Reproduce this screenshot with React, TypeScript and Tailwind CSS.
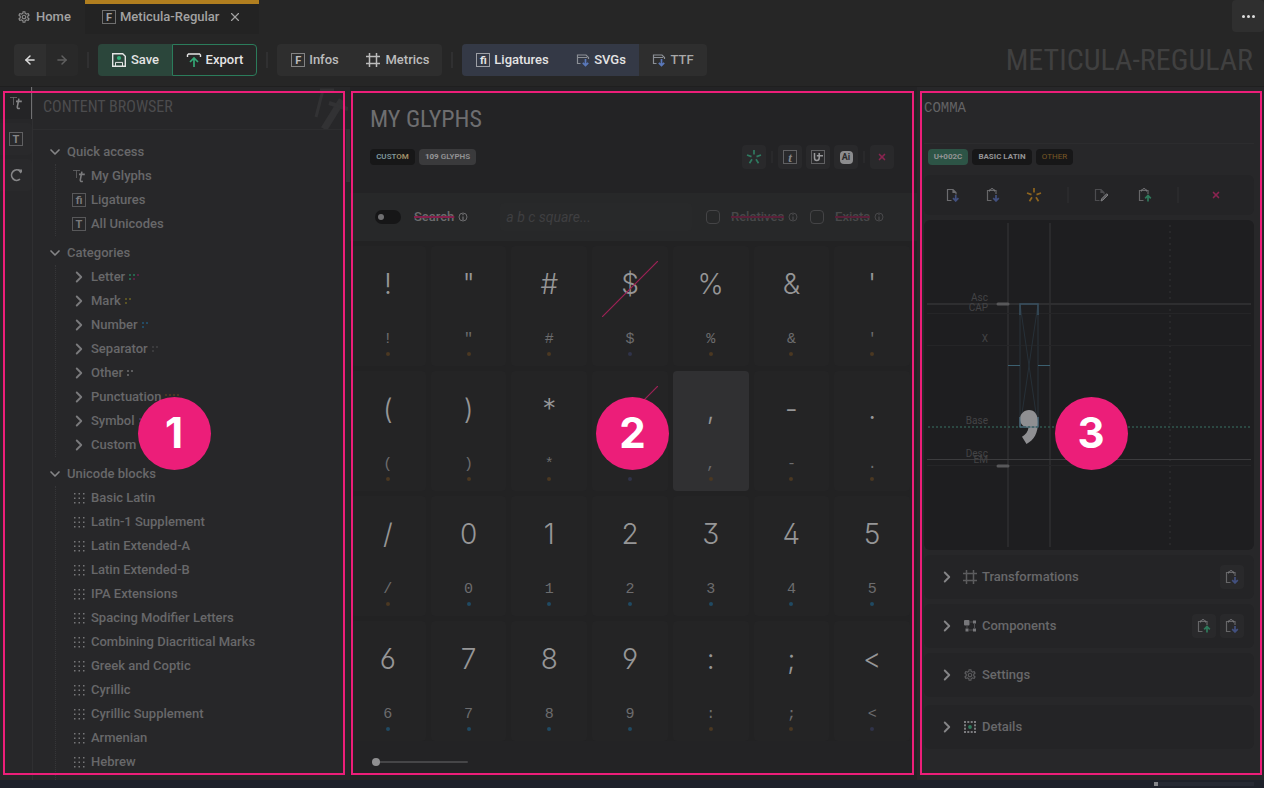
import React from "react";
import { MdOutlineSettings } from "react-icons/md";
import { ArrowLeft, ArrowRight, ChevronDown, ChevronRight, X } from "lucide-react";

type IconProps = { className?: string };

function LetterBox({ children, italic }: { children: React.ReactNode; italic?: boolean }) {
  return (
    <span
      aria-hidden="true"
      className={
        "flex size-3.5 shrink-0 items-center justify-center border border-current/60 leading-none font-bold " +
        (italic ? "font-['Liberation_Serif',serif] text-[13px] italic" : "text-[11px]")
      }
    >
      {children}
    </span>
  );
}

function TtIcon({ className }: IconProps) {
  return (
    <svg className={className} width="14" height="14" viewBox="0 0 14 14" aria-hidden="true">
      <path d="M1 1.5h7M4.5 1.5v7.5" stroke="currentColor" opacity=".6" fill="none" />
      <path d="M9.900 2.600 8.300 10.800c-.2 1.400.6 2.100 2.500 1.400M7 5.400h5.800" stroke="currentColor" strokeWidth="1.6" fill="none" />
    </svg>
  );
}

function RefreshIcon() {
  return (
    <svg width="14" height="14" viewBox="0 0 14 14" aria-hidden="true">
      <path d="M11 11.200a5.200 5.200 0 1 1 .2-8" stroke="currentColor" strokeWidth="1.7" fill="none" />
      <path d="M8.500 1.500h4.500v2.500l-1.500 1.500z" fill="currentColor" />
    </svg>
  );
}

function HashIcon({ className }: IconProps) {
  return (
    <svg className={className} width="16" height="16" viewBox="0 0 16 16" aria-hidden="true">
      <path d="M4.5 1v14M11.5 1v14M1 4.5h14M1 11.5h14" stroke="currentColor" strokeWidth="1.5" fill="none" />
    </svg>
  );
}

function SaveIcon() {
  return (
    <svg width="16" height="16" viewBox="0 0 16 16" aria-hidden="true">
      <path d="M1.7 1.7h10l2.6 2.6v10H1.7z" stroke="currentColor" strokeWidth="1.4" fill="none" />
      <path d="M4.5 14v-3.6h7V14" stroke="currentColor" fill="none" />
      <circle cx="8" cy="6" r="2.1" fill="#35b07c" />
    </svg>
  );
}

function ExportIcon() {
  return (
    <svg width="16" height="16" viewBox="0 0 16 16" aria-hidden="true">
      <path d="M1.5 5V3l1-1h11l1 1v2" stroke="currentColor" strokeWidth="1.4" fill="none" />
      <path d="M8 15V6.500M4 10l4-4 4 4" stroke="#35a877" strokeWidth="1.7" fill="none" />
    </svg>
  );
}

function WindowDownIcon() {
  return (
    <svg width="14" height="14" viewBox="0 0 14 14" aria-hidden="true">
      <path d="M4.500 10.500H1.500v-8.500h8.500l2.500 2.500v1.500M1.500 4.500H11" stroke="#8b8f95" strokeWidth="1.2" fill="none" />
      <path d="M9.500 6v6.500M6.800 9.800l2.700 2.800 2.700-2.800" stroke="#5a78ba" strokeWidth="1.7" fill="none" />
    </svg>
  );
}

function ClipboardIcon({ up }: { up?: boolean }) {
  return (
    <svg width="14" height="14" viewBox="0 0 14 14" aria-hidden="true">
      <path d="M5.500 12.500H1.500V2.500h8.500v3.500" stroke="#666668" strokeWidth="1.2" fill="none" />
      <path d="M3.500 3.500V1.800h1.300l.5-1.200h1.500l.5 1.200h1.200v1.700" stroke="#77777a" strokeWidth="1" fill="none" />
      {up ? (
        <path d="M10 13.500V8M7.200 10.300l2.800-2.800 2.800 2.800" stroke="#2f7a5c" strokeWidth="1.700" fill="none" />
      ) : (
        <path d="M10 7v5.800M7.200 10.200l2.800 2.700 2.800-2.700" stroke="#42507f" strokeWidth="1.700" fill="none" />
      )}
    </svg>
  );
}

function FileIcon({ edit }: { edit?: boolean }) {
  return (
    <svg width="14" height="14" viewBox="0 0 14 14" aria-hidden="true">
      <path
        d="M5.500 12.500H1.500V1.500h5.500l3 3v2M7 1.500v3h3"
        stroke={edit ? "#4c4c4f" : "#6c6c6f"}
        strokeWidth="1.200"
        fill="none"
      />
      {edit ? (
        <path d="m7 13 .7-2.300 5-5 1.300 1.300-5 5z" stroke="#7c7c7f" strokeWidth="1" fill="#5c5c5f" />
      ) : (
        <path d="M9.700 7v5.800M7 10.200l2.700 2.700 2.700-2.700" stroke="#42507f" strokeWidth="1.700" fill="none" />
      )}
    </svg>
  );
}

function BurstIcon({ className }: IconProps) {
  return (
    <svg className={className} width="16" height="16" viewBox="0 0 16 16" aria-hidden="true">
      <path
        d="M8 1v4.500M1 6l4.500 1.600M15 6l-4.500 1.600M3.500 14.300l2.500-4M12.500 14.300l-2.500-4"
        stroke="currentColor"
        strokeWidth="1.700"
        fill="none"
      />
    </svg>
  );
}

function DotsIcon() {
  return (
    <svg width="12" height="12" viewBox="0 0 12 12" aria-hidden="true" fill="#767678">
      {[0, 1, 2].map((r) => [0, 1, 2].map((c) => <rect key={r + "-" + c} x={1 + c * 4.500} y={1 + r * 4.500} width="1.500" height="1.500" />))}
    </svg>
  );
}

function ComponentsIcon() {
  return (
    <svg width="14" height="14" viewBox="0 0 14 14" aria-hidden="true" fill="#77777a">
      <rect x="1" y="1" width="5.500" height="5.500" rx="1" />
      <rect x="10" y="1.500" width="3" height="3" />
      <rect x="2.500" y="9.500" width="3" height="3" />
      <rect x="10" y="9.500" width="3" height="3" />
      <path d="M6.500 3H10M11.500 4.500v5M4 6.500v3M5.500 11H10" stroke="#4c4c4f" />
    </svg>
  );
}

function DetailsIcon() {
  return (
    <svg width="14" height="14" viewBox="0 0 14 14" aria-hidden="true">
      <g fill="#7c7c7f">
        {[1, 4.300, 7.700, 11].map((p) => (
          <React.Fragment key={p}>
            <rect x={p} y="1" width="2" height="2" />
            <rect x={p} y="11" width="2" height="2" />
            <rect x="1" y={p} width="2" height="2" />
            <rect x="11" y={p} width="2" height="2" />
          </React.Fragment>
        ))}
      </g>
      <circle cx="7" cy="7" r="1.900" fill="#2f7a5c" />
    </svg>
  );
}

function InfoIcon() {
  return (
    <svg width="10" height="10" viewBox="0 0 10 10" aria-hidden="true" className="shrink-0">
      <circle cx="5" cy="5" r="4" stroke="currentColor" fill="none" />
      <path d="M5 4.500V8M5 2v1.300" stroke="currentColor" strokeWidth="1.300" />
    </svg>
  );
}

function Divider({ className = "h-4 bg-[#303031]" }: IconProps) {
  return <span className={"w-0.5 shrink-0 " + className} />;
}

function Marker({ n, className }: { n: number; className: string }) {
  return (
    <div className={"pointer-events-none absolute top-1 bottom-[5px] z-20 grid place-items-center border-2 border-[#ec1e79] " + className}>
      <span className="grid size-[73px] place-items-center rounded-full bg-[#ec1e79] font-[Inter,sans-serif] text-[42px] leading-none font-bold text-white">
        {n}
      </span>
    </div>
  );
}

function Header() {
  return (
    <header className="flex h-[34px] shrink-0 justify-between text-[13px] font-medium text-[#a2a2a2]">
      <nav className="flex" aria-label="Tabs">
        <a href="#home" className="flex w-[85px] items-center gap-[5px] pl-[17px]">
          <MdOutlineSettings className="size-3.5 shrink-0 text-[#8c8c8c]" />
          Home
        </a>
        <div className="flex w-[174px] items-center border-t-4 border-[#b07e1f] bg-[#232323] pr-[17px] pb-1 pl-[17px]">
          <a href="#meticula" className="flex flex-1 items-center gap-1">
            <LetterBox>F</LetterBox>
            Meticula-Regular
          </a>
          <button type="button" aria-label="Close tab">
            <X className="size-3.5" />
          </button>
        </div>
      </nav>
      <button type="button" aria-label="More" className="flex h-8 w-8 items-center justify-center gap-[2px] rounded-sm bg-[#2f2f2f]">
        <span className="size-[3px] rounded-full bg-[#dddddd]" />
        <span className="size-[3px] rounded-full bg-[#dddddd]" />
        <span className="size-[3px] rounded-full bg-[#dddddd]" />
      </button>
    </header>
  );
}

function Toolbar() {
  const btn = "flex h-8 items-center justify-center gap-1 ";
  return (
    <div className="flex h-[53px] shrink-0 items-center justify-between border-b border-[#1f1f1f] pr-[11px] pl-3.5 text-[13px] font-medium">
      <div className="flex items-center gap-[9px]">
        <div className="flex overflow-hidden rounded">
          <button type="button" aria-label="Back" className={btn + "w-8 bg-[#2f2f2f] text-[#dddddd]"}>
            <ArrowLeft className="size-3.5" strokeWidth={2.5} />
          </button>
          <button type="button" aria-label="Forward" className={btn + "w-8 bg-[#292929] text-[#606060]"}>
            <ArrowRight className="size-3.5" strokeWidth={2.5} />
          </button>
        </div>
        <Divider />
        <div className="flex text-[#e4e4e4]">
          <button type="button" className={btn + "w-[74px] rounded-l bg-[#2b463b]"}>
            <SaveIcon />
            Save
          </button>
          <button type="button" className={btn + "w-[85px] rounded-r border border-[#2b7c5b]"}>
            <ExportIcon />
            Export
          </button>
        </div>
        <Divider />
        <div className="flex overflow-hidden rounded bg-[#2e2e2e] text-[#bcbcbc]">
          <button type="button" className={btn + "w-[76px]"}>
            <LetterBox>F</LetterBox>
            Infos
          </button>
          <button type="button" className={btn + "w-[89px]"}>
            <HashIcon />
            Metrics
          </button>
        </div>
        <Divider />
        <div className="flex overflow-hidden rounded bg-[#2e2e2e]">
          <button type="button" className={btn + "w-[101px] bg-[#343946] text-[#e4e4e4]"}>
            <LetterBox>fi</LetterBox>
            Ligatures
          </button>
          <button type="button" className={btn + "w-[76px] bg-[#343946] text-[#e4e4e4]"}>
            <WindowDownIcon />
            SVGs
          </button>
          <button type="button" className={btn + "w-[68px] text-[#a8a8a8]"}>
            <WindowDownIcon />
            TTF
          </button>
        </div>
      </div>
      <h1 className="font-['Roboto_Condensed','Liberation_Sans_Narrow',sans-serif] text-3xl leading-none font-normal whitespace-nowrap text-[#404040] uppercase">
        Meticula-Regular
      </h1>
    </div>
  );
}

const categories: { name: string; colors: string[] }[] = [
  { name: "Letter", colors: ["#26654e", "#26654e", "#26654e", "#5a2145", "#5a2145"] },
  { name: "Mark", colors: ["#5a5324", "#5a5324", "#5a5324"] },
  { name: "Number", colors: ["#234a63", "#234a63", "#234a63"] },
  { name: "Separator", colors: ["#3b3b3d", "#3b3b3d", "#3b3b3d"] },
  { name: "Other", colors: ["#5c5c5e", "#5c5c5e", "#5c5c5e"] },
  { name: "Punctuation", colors: ["#493722", "#493722", "#493722", "#493722", "#493722", "#493722"] },
  { name: "Symbol", colors: ["#35385a", "#35385a", "#35385a"] },
  { name: "Custom", colors: [] },
];

const blocks = [
  "Basic Latin",
  "Latin-1 Supplement",
  "Latin Extended-A",
  "Latin Extended-B",
  "IPA Extensions",
  "Spacing Modifier Letters",
  "Combining Diacritical Marks",
  "Greek and Coptic",
  "Cyrillic",
  "Cyrillic Supplement",
  "Armenian",
  "Hebrew",
];

const dotSpots = [
  [0, 1],
  [0, 5],
  [4, 1],
  [4, 5],
  [8, 1],
  [12, 1],
];

function ColorDots({ colors }: { colors: string[] }) {
  return (
    <svg width="16" height="8" viewBox="0 0 16 8" aria-hidden="true">
      {colors.map((c, i) => (
        <rect key={i} x={dotSpots[i][0]} y={dotSpots[i][1]} width="2" height="2" fill={c} />
      ))}
    </svg>
  );
}

function TreeGroup({ title, children }: { title: string; children: React.ReactNode }) {
  return (
    <li>
      <button type="button" aria-expanded="true" className="flex h-6 items-center gap-1">
        <ChevronDown className="size-4 text-[#858587]" strokeWidth={2.5} />
        {title}
      </button>
      <ul className="ml-2 border-l border-dotted border-[#363638] pl-[15px]">{children}</ul>
    </li>
  );
}

function TreeItem({ icon, children }: { icon: React.ReactNode; children: React.ReactNode }) {
  return (
    <li>
      <a href="#glyphs" className="flex h-6 items-center gap-1">
        <span className="flex w-4 shrink-0 justify-center text-[#7a7a7c]">{icon}</span>
        {children}
      </a>
    </li>
  );
}

function Browser() {
  const rail = "flex size-8 items-center justify-center ";
  return (
    <aside className="relative flex w-[350px] shrink-0 bg-[#272729]" aria-label="Content browser">
      <nav className="flex w-8 shrink-0 flex-col gap-1 text-[#858587]" aria-label="Views">
        <button type="button" aria-label="Glyphs" className={rail + "bg-[#242426] shadow-[inset_-1px_0_0_#707072]"}>
          <TtIcon />
        </button>
        <button type="button" aria-label="Unicodes" className={rail + "rounded-r bg-[#29292b]"}>
          <LetterBox>T</LetterBox>
        </button>
        <button type="button" aria-label="Reload" className={rail + "rounded-r bg-[#29292b]"}>
          <RefreshIcon />
        </button>
      </nav>
      <div className="flex min-w-0 flex-1 flex-col border-l border-[#2f2f31]">
        <div className="flex h-[43px] shrink-0 items-start justify-between border-b border-[#2d2d2f] pr-0.5 pl-2.5">
          <h2 className="pt-2 font-['Roboto_Condensed','Liberation_Sans_Narrow',sans-serif] text-base leading-6 font-normal text-[#4c4c4e] uppercase">
            Content browser
          </h2>
          <svg width="34" height="42" viewBox="0 0 34 42" aria-hidden="true" fill="none" stroke="#323234">
            <path d="M6 3h14M9 3 2 30" strokeWidth="3" />
            <path d="M28 13 10 42" strokeWidth="7" />
            <path d="M15 16l19 6" strokeWidth="4" />
          </svg>
        </div>
        <ul className="flex min-h-0 flex-1 flex-col gap-[5px] overflow-hidden pt-2.5 pl-3.5 text-[13px] font-medium text-[#68686a]">
          <TreeGroup title="Quick access">
            <TreeItem icon={<TtIcon />}>My Glyphs</TreeItem>
            <TreeItem icon={<LetterBox>fi</LetterBox>}>Ligatures</TreeItem>
            <TreeItem icon={<LetterBox>T</LetterBox>}>All Unicodes</TreeItem>
          </TreeGroup>
          <TreeGroup title="Categories">
            {categories.map((c) => (
              <TreeItem key={c.name} icon={<ChevronRight className="size-[18px] shrink-0" strokeWidth={2.5} />}>
                {c.name}
                <ColorDots colors={c.colors} />
              </TreeItem>
            ))}
          </TreeGroup>
          <TreeGroup title="Unicode blocks">
            {blocks.map((b) => (
              <TreeItem key={b} icon={<DotsIcon />}>
                {b}
              </TreeItem>
            ))}
            <li className="h-6" />
          </TreeGroup>
        </ul>
      </div>
      <span className="absolute top-[42px] right-0 h-[53px] w-1 bg-[#333335]" />
      <Marker n={1} className="right-[5px] left-[3px]" />
    </aside>
  );
}

type Glyph = { c: string; kind: "punct" | "digit" | "symbol"; missing?: boolean; selected?: boolean };

const glyphs: Glyph[] = [
  ..."!\"#".split("").map((c) => ({ c, kind: "punct" as const })),
  { c: "$", kind: "symbol", missing: true },
  ..."%&'()*".split("").map((c) => ({ c, kind: "punct" as const })),
  { c: "+", kind: "symbol", missing: true },
  { c: ",", kind: "punct", selected: true },
  ..."-./".split("").map((c) => ({ c, kind: "punct" as const })),
  ..."0123456789".split("").map((c) => ({ c, kind: "digit" as const })),
  ...":;".split("").map((c) => ({ c, kind: "punct" as const })),
  { c: "<", kind: "symbol" },
];

const dotColor = { punct: "bg-[#4b3822]", digit: "bg-[#204a63]", symbol: "bg-[#30334a]" };

function GlyphCell({ g }: { g: Glyph }) {
  return (
    <button
      type="button"
      className={"relative flex h-[120px] flex-col items-center rounded " + (g.selected ? "bg-[#303032]" : "bg-[#242425]")}
    >
      <span className="flex h-[76px] items-center font-[Inter,sans-serif] text-[28px] font-[350] text-[#969697] [font-feature-settings:'cv09','ss01']">
        {g.c}
      </span>
      <span className="flex h-8 items-center pt-1 font-['Liberation_Mono',monospace] text-[15px] text-[#6c6c6e]">{g.c}</span>
      <span className={"-mt-0.5 size-1 rounded-full " + dotColor[g.kind]} />
      {g.missing && (
        <svg className="absolute inset-x-0 top-[15px] mx-auto" width="56" height="56" viewBox="0 0 56 56" aria-hidden="true">
          <path d="M0 56 56 0" stroke="#9e2257" strokeWidth="1.200" />
        </svg>
      )}
    </button>
  );
}

function GlyphsPanel() {
  const tool = "flex size-6 items-center justify-center rounded bg-[#29292b] ";
  return (
    <main className="relative flex min-w-0 flex-1 flex-col bg-[#232325]">
      <div className="flex h-[106px] shrink-0 flex-col pr-[23px] pl-5">
        <h2 className="pt-4 font-['Roboto_Condensed','Liberation_Sans_Narrow',sans-serif] text-2xl leading-8 font-normal text-[#6e6e70] uppercase">
          My Glyphs
        </h2>
        <div className="mt-2.5 flex items-center justify-between">
          <div className="flex gap-1 text-[8px] leading-4 font-semibold text-[#939395]">
            <span className="w-[45px] rounded bg-[#171718] text-center">
              <span className="text-[#7f979d]">CUST</span>
              <span className="text-[#a09168]">OM</span>
            </span>
            <span className="w-[57px] rounded bg-[#3a3a3c] text-center">
              <b className="font-extrabold">109</b> GLYPHS
            </span>
          </div>
          <div className="flex items-center gap-1">
            <button type="button" aria-label="Add glyphs" className={tool + "text-[#2f7a60]"}>
              <BurstIcon />
            </button>
            <Divider className="mx-px h-3 bg-[#29292b]" />
            <button type="button" aria-label="Add from text" className={tool + "text-[#858587]"}>
              <LetterBox italic>t</LetterBox>
            </button>
            <button type="button" aria-label="Add from unicode" className={tool + "text-[#9a9a9c]"}>
              <span className="flex size-3.5 items-center justify-center border border-current/50">
                <svg width="10" height="10" viewBox="0 0 10 10" fill="none" stroke="currentColor" strokeWidth="1.500" aria-hidden="true">
                  <path d="M1.500 1v5q0 2.500 2.300 2.500T6.200 6V1M3.800 3.800H10" />
                </svg>
              </span>
            </button>
            <button type="button" aria-label="Add from Illustrator" className={tool}>
              <span className="flex size-[13px] items-center justify-center rounded-sm bg-[#8c8c8e] text-[9px] leading-none font-bold text-[#29292b]">
                Ai
              </span>
            </button>
            <Divider className="mx-px h-3 bg-[#29292b]" />
            <button type="button" aria-label="Remove glyphs" className={tool + "text-[#8a2450]"}>
              <X className="size-2.5" strokeWidth={4} />
            </button>
          </div>
        </div>
      </div>

      <form
        className="flex h-12 shrink-0 items-center bg-[#272829] pr-[33px] pl-[25px] text-[13px] font-medium text-[#6c6c6e]"
        onSubmit={(e) => e.preventDefault()}
      >
        <label className="flex items-center gap-[13px]">
          <input
            type="checkbox"
            role="switch"
            className="h-3.5 w-[26px] appearance-none rounded-full bg-[#161617] before:mt-1 before:ml-[3px] before:block before:size-1.5 before:rounded-full before:bg-[#6f6f71]"
          />
          <span className="flex items-center gap-1">
            <span className="line-through decoration-[#84204c] decoration-2">Search</span>
            <InfoIcon />
          </span>
        </label>
        <input
          type="text"
          aria-label="Search glyphs"
          placeholder="a b c square..."
          className="ml-8 h-7 w-48 min-w-0 rounded bg-[#28292a] pl-1.5 text-sm font-normal italic placeholder:text-[#3f3f41]"
        />
        <div className="ml-auto flex gap-3 text-[#48484a]">
          {["Relatives", "Exists"].map((label) => (
            <label key={label} className="flex items-center gap-1">
              <input type="checkbox" className="mr-[7px] size-3.5 appearance-none rounded-sm border border-[#444446]" />
              <span className="line-through decoration-[#5a2039] decoration-2">{label}</span>
              <InfoIcon />
            </label>
          ))}
        </div>
      </form>

      <div className="flex min-h-0 flex-1 flex-col overflow-hidden pr-[7px]">
        <div className="grid shrink-0 grid-cols-7 gap-[5px] bg-[#222223] pt-[5px]">
          {glyphs.map((g) => (
            <GlyphCell key={g.c} g={g} />
          ))}
        </div>
        <input
          type="range"
          aria-label="Glyph size"
          min={0}
          max={100}
          defaultValue={0}
          className="mt-[17px] ml-[22px] h-2 w-24 appearance-none bg-transparent [&::-webkit-slider-runnable-track]:h-0.5 [&::-webkit-slider-runnable-track]:rounded [&::-webkit-slider-runnable-track]:bg-[#464648] [&::-webkit-slider-thumb]:-mt-[3px] [&::-webkit-slider-thumb]:size-2 [&::-webkit-slider-thumb]:appearance-none [&::-webkit-slider-thumb]:rounded-full [&::-webkit-slider-thumb]:bg-[#8f8f91]"
        />
      </div>
      <Marker n={2} className="right-[3px] left-px" />
    </main>
  );
}

function GlyphCanvas() {
  const labels: [string, number][] = [
    ["Asc", 81],
    ["CAP", 91],
    ["X", 122],
    ["Base", 204],
    ["Desc", 237],
    ["EM", 243],
  ];
  return (
    <svg viewBox="0 0 330 330" className="block w-full rounded-md bg-[#1e1e20]" role="img" aria-label="Comma outline">
      <g fill="none">
        <path d="M84 3v324M126 3v324" stroke="#2a2a2c" strokeWidth="2" />
        <path d="M246 5v322" stroke="#28282a" strokeWidth="2" strokeDasharray="2 4" />
        <path d="M3 84h324" stroke="#2e2e30" strokeWidth="2" />
        <path d="M3 93.500h324M3 125.500h324M3 245.500h324" stroke="#252527" />
        <path d="M3 239.500h324" stroke="#3c3c3e" />
        <path d="M96 94v103M114 94v103" stroke="#23282d" strokeWidth="2" />
        <path d="M96 84l18 123M114 84L96 207" stroke="#263038" />
        <path d="M96 95V84h18v11M96 197v10h18v-10" stroke="#385060" strokeWidth="1.500" />
        <path d="M84 145.500h12M114 145.500h12" stroke="#3c6070" />
        <path d="M74 84h10M74 246h10" stroke="#58585a" strokeWidth="3" strokeLinecap="round" />
      </g>
      <path
        d="M105 190C100 190 96 194 96 199C96 204 100 207.500 104.500 207.500C104 212 101.500 214.500 98 216.800L102.500 224C110 220 114 213 114 202C114 194.500 110.500 190 105 190Z"
        fill="#8f8f92"
      />
      <path d="M4 207h323" stroke="#31574d" strokeWidth="1.500" strokeDasharray="2 2" />
      <path d="M96 197v10h18v-10" stroke="#4f6d7c" fill="none" />
      <g fill="#434345" fontSize="10" textAnchor="end" fontFamily="Roboto, sans-serif">
        {labels.map(([t, y]) => (
          <text key={t} x="64" y={y}>
            {t}
          </text>
        ))}
      </g>
    </svg>
  );
}

function Accordion({ icon, title, children }: { icon: React.ReactNode; title: string; children?: React.ReactNode }) {
  return (
    <section className="flex h-11 shrink-0 items-center justify-between rounded-md bg-[#242426] pr-2.5 pl-3.5">
      <button type="button" aria-expanded="false" className="flex items-center text-[13px] font-medium text-[#68686a]">
        <ChevronRight className="mr-1.5 size-[18px] text-[#858587]" strokeWidth={2.5} />
        <span className="mr-1 flex w-4 justify-center text-[#5c5c5e]">{icon}</span>
        {title}
      </button>
      <div className="flex gap-1">{children}</div>
    </section>
  );
}

function Inspector() {
  const small = "flex size-6 items-center justify-center rounded-sm bg-[#29292b]";
  return (
    <aside className="relative w-[347px] shrink-0 bg-[#272729] pr-2.5 pl-[7px]" aria-label="Glyph inspector">
      <div className="flex h-full flex-col overflow-hidden">
        <h2 className="h-[57px] shrink-0 border-b border-[#2c2c2e] pt-3 font-['Liberation_Mono',monospace] text-sm leading-[18px] text-[#636365] uppercase">
          Comma
        </h2>
        <div className="mt-[5px] flex shrink-0 gap-1 pl-1 text-[8px] leading-4 font-bold text-[#939395]">
          <span className="w-10 rounded bg-[#2d5446] text-center">U+002C</span>
          <span className="w-[60px] rounded bg-[#171718] text-center">BASIC LATIN</span>
          <span className="w-[37px] rounded bg-[#171718] text-center font-normal text-[#7a5826]">OTHER</span>
        </div>
        <div className="mt-2.5 flex h-10 shrink-0 items-center justify-between rounded-md bg-[#242426] pr-[26px] pl-[22px]">
          <div className="flex items-center gap-[26px]">
            <button type="button" aria-label="Import file">
              <FileIcon />
            </button>
            <button type="button" aria-label="Paste">
              <ClipboardIcon />
            </button>
            <button type="button" aria-label="Refresh glyph">
              <BurstIcon className="text-[#8f651e]" />
            </button>
          </div>
          <Divider className="h-4 bg-[#2a2a2c]" />
          <div className="flex items-center gap-[30px]">
            <button type="button" aria-label="Edit">
              <FileIcon edit />
            </button>
            <button type="button" aria-label="Copy">
              <ClipboardIcon up />
            </button>
          </div>
          <Divider className="h-4 bg-[#2a2a2c]" />
          <button type="button" aria-label="Delete" className="flex w-6 justify-center text-[#8a2450]">
            <X className="size-2.5" strokeWidth={4} />
          </button>
        </div>
        <div className="mt-[5px] shrink-0">
          <GlyphCanvas />
        </div>
        <div className="mt-[5px] flex flex-col gap-[5px]">
          <Accordion icon={<HashIcon className="size-4" />} title="Transformations">
            <button type="button" aria-label="Paste transformations" className={small}>
              <ClipboardIcon />
            </button>
          </Accordion>
          <Accordion icon={<ComponentsIcon />} title="Components">
            <button type="button" aria-label="Copy components" className={small}>
              <ClipboardIcon up />
            </button>
            <button type="button" aria-label="Paste components" className={small}>
              <ClipboardIcon />
            </button>
          </Accordion>
          <Accordion icon={<MdOutlineSettings className="size-3.5" />} title="Settings" />
        </div>
        <div className="mt-2">
          <Accordion icon={<DetailsIcon />} title="Details" />
        </div>
      </div>
      <Marker n={3} className="right-[2px] left-[3px]" />
    </aside>
  );
}

export default function App() {
  return (
    <div className="flex h-screen flex-col overflow-hidden bg-[#262626] font-[Roboto,sans-serif]">
      <Header />
      <Toolbar />
      <div className="flex min-h-0 flex-1 bg-[#1e1e1f]">
        <Browser />
        <GlyphsPanel />
        <Inspector />
      </div>
      <footer className="flex h-2 shrink-0 items-center justify-end bg-[#1e212a] pr-2.5">
        <span className="size-1 bg-[#85868a]" />
        <span className="h-1 w-24 bg-[#262933]" />
      </footer>
    </div>
  );
}
